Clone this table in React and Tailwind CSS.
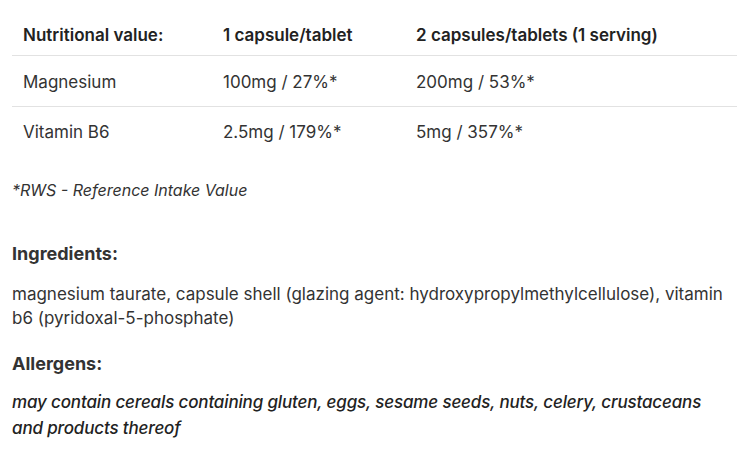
export default function App() {
  const rows = [
    ["Magnesium", "100mg / 27%*", "200mg / 53%*"],
    ["Vitamin B6", "2.5mg / 179%*", "5mg / 357%*"],
  ]

  return (
    <div className="min-h-[453px] bg-white px-3 pt-3 font-['Inter',sans-serif] text-[#222]">
      <table className="w-[725px] border-collapse text-[17px]">
        <thead>
          <tr className="h-[43px] border-b border-[#e2e2e2] text-left">
            <th className="w-[200px] pl-[11px] pt-[4px] font-semibold">Nutritional value:</th>
            <th className="w-[193px] pl-[11px] pt-[4px] font-semibold">1 capsule/tablet</th>
            <th className="pl-[11px] pt-[4px] font-semibold">2 capsules/tablets (1 serving)</th>
          </tr>
        </thead>
        <tbody>
          {rows.map((row, i) => (
            <tr key={row[0]} className={i === 0 ? "h-[51px] border-b border-[#e2e2e2]" : "h-[51px]"}>
              {row.map((cell) => (
                <td key={cell} className={i === 0 ? "pl-[11px] pt-[5px] text-[#333]" : "pl-[11px] pt-[2px] text-[#333]"}>{cell}</td>
              ))}
            </tr>
          ))}
        </tbody>
      </table>

      <p className="mt-[21px] text-[16px] italic text-[#333]">*RWS - Reference Intake Value</p>

      <h3 className="mt-[38px] text-[18px] font-bold text-[#333]">Ingredients:</h3>
      <p className="mt-[15px] w-[727px] text-[17px] leading-6 text-[#333]">
        magnesium taurate, capsule shell (glazing agent: hydroxypropylmethylcellulose), vitamin b6 (pyridoxal-5-phosphate)
      </p>
      <h3 className="mt-[20px] text-[18px] font-bold text-[#333]">Allergens:</h3>
      <p className="mt-[12px] w-[720px] text-[17px] font-medium italic leading-[26px] tracking-[-0.15px] text-[#222]">
        may contain cereals containing gluten, eggs, sesame seeds, nuts, celery, crustaceans and products thereof
      </p>
    </div>
  )
}
